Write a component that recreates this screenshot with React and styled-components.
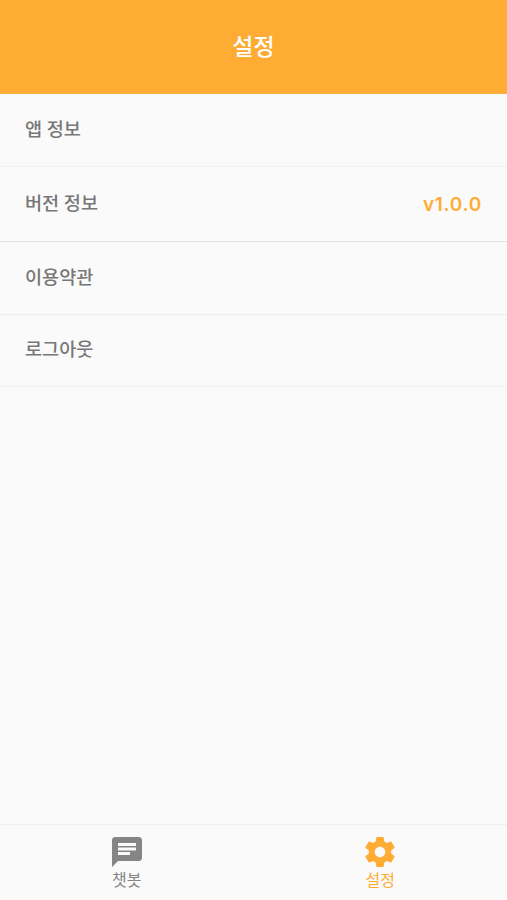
import styled, { createGlobalStyle } from "styled-components";
import { MdChat } from "react-icons/md";

const GlobalStyle = createGlobalStyle`
body {
  margin: 0;
  background: #fafafa;
  font-family: Roboto, "Noto Sans CJK KR", sans-serif;
}
* {
  box-sizing: border-box;
}
`;

const Container = styled.div`
display: flex;
flex-direction: column;
height: 100vh;
`;

const Header = styled.header`
height: 94px;
display: flex;
align-items: center;
justify-content: center;
padding-top: 2px;
background: #ffac35;
border-bottom: 1px solid #fcb040;
`;

const Title = styled.h1`
margin: 0;
font-size: 23px;
line-height: 30px;
font-weight: 500;
color: white;
`;

const List = styled.ul`
flex: 1;
margin: 0;
padding: 0;
list-style: none;
`;

const Item = styled.li`
display: flex;
align-items: center;
justify-content: space-between;
height: ${(props) => props.$height}px;
padding: 0 25px ${(props) => props.$lift}px 25px;
border-bottom: 1px solid ${(props) => props.$line};
`;

const Label = styled.span`
font-size: 18.6px;
line-height: 28px;
font-weight: 500;
color: #777777;
`;

const Version = styled.span`
padding-top: 1px;
font-family: Inter, sans-serif;
font-size: 19px;
line-height: 24px;
font-weight: 600;
letter-spacing: 0.7px;
color: #ffac35;
`;

const TabBar = styled.nav`
display: flex;
height: 76px;
border-top: 1px solid #f0f0f0;
`;

const Tab = styled.div`
flex: 1;
display: flex;
flex-direction: column;
align-items: center;
padding-top: 9px;
color: ${(props) => (props.$active ? "#ffac35" : "#858585")};
`;

const TabLabel = styled.span`
margin-top: 1px;
font-size: 16px;
line-height: 20px;
`;

const GearIcon = () => (
  <svg width="36" height="36" viewBox="0 0 24 24" fill="currentColor">
    <path d="M19.43 12.98c.04-.32.07-.64.07-.98s-.03-.66-.07-.98l2.11-1.65c.19-.15.24-.42.12-.64l-2-3.46c-.12-.22-.39-.3-.61-.22l-2.49 1c-.52-.4-1.08-.73-1.69-.98l-.38-2.65C14.46 2.18 14.25 2 14 2h-4c-.25 0-.46.18-.49.42l-.38 2.65c-.61.25-1.17.59-1.69.98l-2.49-1c-.23-.09-.49 0-.61.22l-2 3.46c-.13.22-.07.49.12.64l2.11 1.65c-.04.32-.07.65-.07.98s.03.66.07.98l-2.11 1.65c-.19.15-.24.42-.12.64l2 3.46c.12.22.39.3.61.22l2.49-1c.52.4 1.08.73 1.69.98l.38 2.65c.03.24.24.42.49.42h4c.25 0 .46-.18.49-.42l.38-2.65c.61-.25 1.17-.59 1.69-.98l2.49 1c.23.09.49 0 .61-.22l2-3.46c.12-.22.07-.49-.12-.64l-2.11-1.65zM12 15.5c-1.93 0-3.5-1.57-3.5-3.5s1.57-3.5 3.5-3.5 3.5 1.57 3.5 3.5-1.57 3.5-3.5 3.5z" />
  </svg>
);

const items = [
  { label: "앱 정보", height: 73, lift: 0, line: "#f0f0f0" },
  { label: "버전 정보", height: 75, lift: 0, line: "#e2e2e2", value: "v1.0.0" },
  { label: "이용약관", height: 73, lift: 1, line: "#eeeeee" },
  { label: "로그아웃", height: 72, lift: 2, line: "#f0f0f0" },
];

const App = () => {
  return (
    <Container>
      <GlobalStyle />
      <Header>
        <Title>설정</Title>
      </Header>
      <List>
        {items.map((item) => (
          <Item key={item.label} $height={item.height} $lift={item.lift} $line={item.line}>
            <Label>{item.label}</Label>
            {item.value && <Version>{item.value}</Version>}
          </Item>
        ))}
      </List>
      <TabBar>
        <Tab>
          <MdChat size={36} />
          <TabLabel>챗봇</TabLabel>
        </Tab>
        <Tab $active>
          <GearIcon />
          <TabLabel>설정</TabLabel>
        </Tab>
      </TabBar>
    </Container>
  );
};

export default App;
